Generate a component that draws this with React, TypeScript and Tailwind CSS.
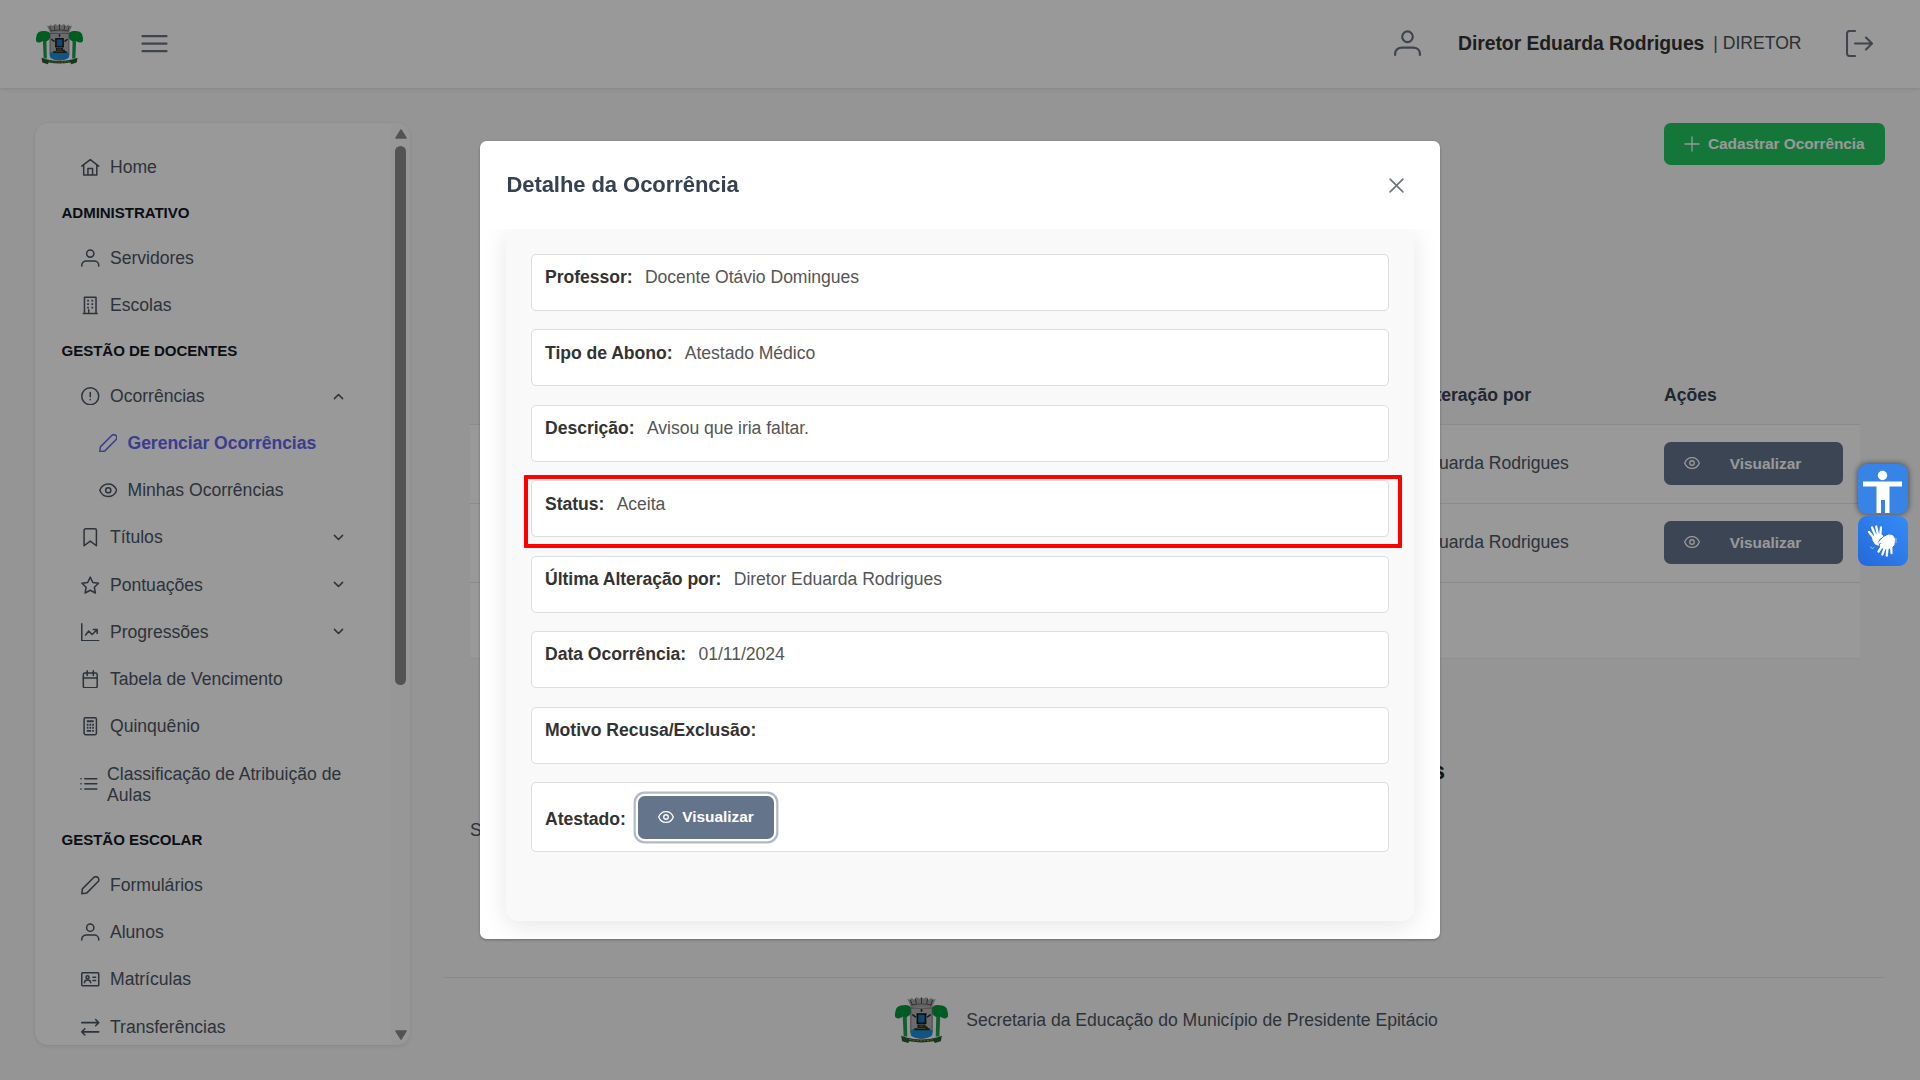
import React from "react";

type IconProps = { className?: string };

const Svg = ({ className = "", children, sw = 1.95 }: { className?: string; children: React.ReactNode; sw?: number }) => (
  <svg viewBox="0 0 24 24" fill="none" stroke="currentColor" strokeWidth={sw} strokeLinecap="round" strokeLinejoin="round" className={`shrink-0 ${className}`}>
    {children}
  </svg>
);

const HomeIcon = (p: IconProps) => (
  <Svg {...p}>
    <path d="M1 10.500 12 2l11 8.500M3.500 9v13h17V9M9 22v-8.500h6V22" />
  </Svg>
);
const UserIcon = (p: IconProps) => (
  <Svg {...p}>
    <circle cx="12" cy="6" r="4.700" />
    <path d="M1 22.200v-1.200c0-3 2.500-5.300 6-5.300h10c3.500 0 6 2.300 6 5.300v1.200" />
  </Svg>
);
const BuildingIcon = (p: IconProps) => (
  <Svg {...p}>
    <path d="M4.500 22.500V1.500h15v21M3 22.800h18M10 22v-4" />
    <path strokeWidth={2.400} strokeLinecap="butt" d="M8 6h2.300M13.500 6h2.300M8 10.500h2.300M13.500 10.500h2.300M8 15h2.300M13.500 15h2.300" />
  </Svg>
);
const AlertIcon = (p: IconProps) => (
  <Svg {...p}>
    <circle cx="12" cy="12" r="11" />
    <path d="M12 7v5.500M12 16.300v.3" strokeWidth={2} />
  </Svg>
);
const PencilIcon = (p: IconProps) => (
  <Svg {...p}>
    <path d="M1 23l.8-6.300L16.500 2a3.800 3.800 0 0 1 5.500 5.500L7.300 22.200z" />
  </Svg>
);
const EyeIcon = (p: IconProps) => (
  <Svg {...p}>
    <path d="M1 12C3 7 7 3.800 12 3.800S21 7 23 12c-2 5-6 8.200-11 8.200S3 17 1 12z" />
    <circle cx="12" cy="12" r="3.400" />
  </Svg>
);
const BookmarkIcon = (p: IconProps) => (
  <Svg {...p}>
    <path d="M4 23V3a2 2 0 0 1 2-2h12a2 2 0 0 1 2 2v20l-8-6z" />
  </Svg>
);
const StarIcon = (p: IconProps) => (
  <Svg {...p}>
    <path d="M12 1.500l3.300 6.900 7.500 1-5.500 5.200 1.400 7.500L12 18.500l-6.700 3.600 1.400-7.500L1.200 9.400l7.500-1z" />
  </Svg>
);
const ChartIcon = (p: IconProps) => (
  <Svg {...p}>
    <path d="M1 1v22h22M6 15.500l4-5 4.500 4.500L21 8.500M16 8.500h5v5" />
  </Svg>
);
const CalendarIcon = (p: IconProps) => (
  <Svg {...p}>
    <rect x="3" y="4" width="18" height="19" rx="2" />
    <path d="M3 10.500h18M8 1v6M16 1v6" />
  </Svg>
);
const CalcIcon = (p: IconProps) => (
  <Svg {...p}>
    <rect x="4" y="1" width="16" height="22" rx="1.800" />
    <path strokeLinecap="butt" strokeWidth={2.500} d="M7.500 5.500h9M7.500 10h2.200M11 10h2.200M14.500 10h2.200M7.500 14h2.200M11 14h2.200M14.500 14h2.200M7.500 18h5.700M14.500 18h2.200" />
  </Svg>
);
const ListIcon = (p: IconProps) => (
  <Svg {...p}>
    <path d="M6.500 5H23M6.500 12H23M6.500 19H23M1.200 5h.3M1.200 12h.3M1.200 19h.3" />
  </Svg>
);
const IdIcon = (p: IconProps) => (
  <Svg {...p}>
    <rect x="1" y="3.500" width="22" height="17" rx="1" />
    <circle cx="8.500" cy="9.300" r="2" />
    <path d="M4.500 16.500c0-2.500 1.500-3.500 4-3.500s4 1 4 3.500M15.500 9.500h3.500M15.500 13.500h3.500" />
  </Svg>
);
const SwapIcon = (p: IconProps) => (
  <Svg {...p}>
    <path d="M1 6h22M19 2l4 4-4 4M23 18H1M5 14l-4 4 4 4" />
  </Svg>
);
const ChevronIcon = ({ up, className = "" }: { up?: boolean; className?: string }) => (
  <svg viewBox="0 0 14 14" fill="none" stroke="currentColor" strokeWidth={1.400} strokeLinecap="round" strokeLinejoin="round" className={`shrink-0 ${className}`}>
    <path d={up ? "M3.200 9l3.800-3.800L10.800 9" : "M3.200 5l3.800 3.800L10.800 5"} />
  </svg>
);

const Crest = ({ className = "" }: IconProps) => (
  <svg viewBox="0 0 52 52" preserveAspectRatio="none" className={`shrink-0 ${className}`}>
    <path d="M12 3l3 1 1-2 3 2 2-3 3 2 2-2 2 2 3-2 2 3 3-2 1 2 3-1-4 10q-10-2-20 0z" fill="#a9a9a9" />
    <path d="M15 4l2 6M20 3l1 6M26 2v7M32 3l-1 6M37 4l-2 6M16 10q10-3 20 0" stroke="#4d4d4d" strokeWidth="1" fill="none" />
    <path d="M7.500 20h4l.5 24H8.500zM44.500 20h-4l-.5 24h3.500z" fill="#19a04a" />
    <path d="M1 14q2-4 7-4 6-1 8 3 1 5-2 8-3 3-6 1-3 3-6 2-3-1-2-5zM51 14q-2-4-7-4-6-1-8 3-1 5 2 8 3 3 6 1 3 3 6 2 3-1 2-5z" fill="#009a3b" />
    <path d="M15.500 13h21v26q0 6-10.500 7-10.500-1-10.500-7z" fill="#b4b4b4" stroke="#666" strokeWidth=".9" />
    <path d="M15.500 37q5-3 10.500-1 5.500-2 10.500 1v5q0 3-10.500 4-10.500-1-10.500-4z" fill="#1b8fda" />
    <rect x="22" y="19.500" width="8" height="10" fill="#1679b8" stroke="#111" strokeWidth="1.600" />
    <path d="M17 20l3.500 3M35 20l-3.500 3M26 14v3" stroke="#222" strokeWidth="1.600" />
    <path d="M22 31h8v2h2v2h2v2H19v-2h3z" fill="#2a2a24" />
    <path d="M24 32.500h4M22 35h8" stroke="#a98a4a" strokeWidth=".8" />
    <path d="M6 43l5 2q15 4 30 0l5-2-1 6-6 2-1-2q-12 2.500-24 0l-1 2-6-2z" fill="#2c5a30" />
    <path d="M14 47q12 3 24 0" stroke="#a59a3c" strokeWidth="1" strokeDasharray="2 1.500" fill="none" />
  </svg>
);

type Row = { kind: "title" | "item" | "sub" | "wrap"; label: string; icon?: React.FC<IconProps>; chevron?: "up" | "down"; active?: boolean };

const menu: Row[] = [
  { kind: "item", label: "Home", icon: HomeIcon },
  { kind: "title", label: "Administrativo" },
  { kind: "item", label: "Servidores", icon: UserIcon },
  { kind: "item", label: "Escolas", icon: BuildingIcon },
  { kind: "title", label: "Gestão de Docentes" },
  { kind: "item", label: "Ocorrências", icon: AlertIcon, chevron: "up" },
  { kind: "sub", label: "Gerenciar Ocorrências", icon: PencilIcon, active: true },
  { kind: "sub", label: "Minhas Ocorrências", icon: EyeIcon },
  { kind: "item", label: "Títulos", icon: BookmarkIcon, chevron: "down" },
  { kind: "item", label: "Pontuações", icon: StarIcon, chevron: "down" },
  { kind: "item", label: "Progressões", icon: ChartIcon, chevron: "down" },
  { kind: "item", label: "Tabela de Vencimento", icon: CalendarIcon },
  { kind: "item", label: "Quinquênio", icon: CalcIcon },
  { kind: "wrap", label: "Classificação de Atribuição de Aulas", icon: ListIcon },
  { kind: "title", label: "Gestão Escolar" },
  { kind: "item", label: "Formulários", icon: PencilIcon },
  { kind: "item", label: "Alunos", icon: UserIcon },
  { kind: "item", label: "Matrículas", icon: IdIcon },
  { kind: "item", label: "Transferências", icon: SwapIcon },
];

const MenuRow = ({ row }: { row: Row }) => {
  if (row.kind === "title")
    return <div className="flex h-[43.4px] items-center pt-[1.500px] pl-[26.500px] text-[15.08px] tracking-[-0.06px] font-bold uppercase text-[#111827]">{row.label}</div>;
  const Icon = row.icon!;
  if (row.kind === "wrap")
    return (
      <div className="flex h-[68.400px] items-center pl-[45px]">
        <Icon className="size-[17.600px]" />
        <span className="mt-[1px] ml-[9.500px] w-[250px] leading-[21px]">{row.label}</span>
      </div>
    );
  return (
    <div className={`flex h-[47.200px] items-center ${row.kind === "sub" ? "pl-[63.500px]" : "pl-[46px]"} ${row.active ? "font-bold tracking-[-0.05px] text-[#6366f1]" : ""}`}>
      <Icon className="size-[18.500px]" />
      <span className="ml-[10.500px]">{row.label}</span>
      {row.chevron && <ChevronIcon up={row.chevron === "up"} className="ml-auto mr-[45px] size-[15px]" />}
    </div>
  );
};

const Sidebar = () => (
  <aside className="flex h-[922px] w-[375px] overflow-hidden rounded-[13px] bg-white shadow-[0_3px_5px_rgba(0,0,0,0.02),0_0_2px_rgba(0,0,0,0.05),0_1px_4px_rgba(0,0,0,0.08)]">
    <nav className="w-[356px] pt-[21.100px]">
      {menu.map((row) => (
        <MenuRow key={row.label} row={row} />
      ))}
    </nav>
    <div className="flex w-[19px] flex-col items-center bg-[#fcfcfc] pt-[6px] pb-[5px] text-[#8b8b8b]">
      <svg viewBox="0 0 12 10" className="h-[10px] w-[12px]" fill="currentColor" stroke="currentColor" strokeWidth="1.500" strokeLinejoin="round"><path d="M6 1l5 8H1z" /></svg>
      <div className="mt-[7px] mr-[1px] h-[539px] w-[11px] rounded-full bg-[#8b8b8b]" />
      <svg viewBox="0 0 12 10" className="mt-auto h-[10px] w-[12px]" fill="currentColor" stroke="currentColor" strokeWidth="1.500" strokeLinejoin="round"><path d="M6 9l5-8H1z" /></svg>
    </div>
  </aside>
);

const Topbar = () => (
  <header className="relative flex h-[88px] items-center bg-white pl-[36px] pr-[47.500px] shadow-[0_3px_5px_rgba(0,0,0,0.02),0_0_2px_rgba(0,0,0,0.05),0_1px_4px_rgba(0,0,0,0.08)]">
    <Crest className="h-[42px] w-[47px]" />
    <svg viewBox="0 0 26 18" className="ml-[58px] h-[18px] w-[27px] text-[#6b7280]" stroke="currentColor" strokeWidth="2.200" strokeLinecap="round">
      <path d="M1 1.200h24M1 8.700h24M1 16.200h24" />
    </svg>
    <UserIcon className="mb-[1px] ml-auto size-[27px] text-[#6b7280]" />
    <span className="ml-[37px] text-[19.360px] tracking-[-0.04px] font-bold text-[#333]">Diretor Eduarda Rodrigues</span>
    <span className="mb-[2px] ml-[9px] text-[17.600px] text-[#495057]">| DIRETOR</span>
    <svg viewBox="0 0 27 27" className="mb-[1px] ml-[44px] size-[27px] text-[#6b7280]" fill="none" stroke="currentColor" strokeWidth="2.100" strokeLinecap="round" strokeLinejoin="round">
      <path d="M9 1H3.500A2.500 2.500 0 0 0 1 3.500v20A2.500 2.500 0 0 0 3.500 26H9M9 13.500h17M20 7.500l6 6-6 6" />
    </svg>
  </header>
);

const TableRow = () => (
  <div className="flex h-[79px] items-center border-b border-[#e5e7eb] bg-white pb-[2px]">
    <span className="ml-[890px] w-[304px]">Diretor Eduarda Rodrigues</span>
    <button className="flex h-[43px] w-[179px] items-center rounded-[6.600px] bg-[#64748b] pl-[20px] text-[15.400px] font-bold text-white">
      <EyeIcon className="size-[16px]" />
      <span className="mt-[1px] flex-1 pr-[12px] text-center">Visualizar</span>
    </button>
  </div>
);

const Main = () => (
  <main className="ml-[33px] flex flex-1 flex-col">
    <div className="flex justify-end">
      <button className="flex h-[42px] w-[221px] items-center rounded-[6.600px] bg-[#22c55e] pl-[20px] text-[15.400px] tracking-[-0.04px] font-bold text-white">
        <svg viewBox="0 0 16 16" className="size-[16px]" stroke="currentColor" strokeWidth="1.300" strokeLinecap="round"><path d="M8 1v14M1 8h14" /></svg>
        <span className="ml-[8px]">Cadastrar Ocorrência</span>
      </button>
    </div>
    <section className="mt-[200px] ml-[27px] w-[1390px]">
      <div className="flex h-[60px] items-center border-b border-[#e5e7eb] pt-[2px] font-bold text-[#374151]">
        <span className="ml-[890px] w-[304px]">Última Alteração por</span>
        <span>Ações</span>
      </div>
      <TableRow />
      <TableRow />
      <div className="h-[76px] border-b border-[#eff1f4] bg-white" />
    </section>
    <h2 className="mt-[96px] mr-[440px] text-right text-[24px] leading-[32px] font-bold text-[#212529]">Ocorrências</h2>
    <p className="mt-[32px] ml-[27px] leading-[22px]">Status</p>
    <footer className="mt-[136px] flex h-[84px] items-center justify-center border-t border-[#e5e7eb] pl-[5px]">
      <Crest className="h-[48px] w-[53px]" />
      <span className="mt-[2px] ml-[18px] tracking-[-0.03px]">Secretaria da Educação do Município de Presidente Epitácio</span>
    </footer>
  </main>
);

const fields = [
  ["Professor:", "Docente Otávio Domingues"],
  ["Tipo de Abono:", "Atestado Médico"],
  ["Descrição:", "Avisou que iria faltar."],
  ["Status:", "Aceita"],
  ["Última Alteração por:", "Diretor Eduarda Rodrigues"],
  ["Data Ocorrência:", "01/11/2024"],
  ["Motivo Recusa/Exclusão:", ""],
];

const Modal = () => (
  <div className="flex h-[798px] w-[960px] flex-col overflow-hidden rounded-[6.600px] bg-white shadow-[0_1px_3px_rgba(0,0,0,0.3)]">
    <div className="flex h-[88px] items-center justify-between pl-[26.400px] pr-[36px]">
      <h1 className="mb-[2px] text-[22px] tracking-[-0.06px] font-bold text-[#374151]">Detalhe da Ocorrência</h1>
      <svg viewBox="0 0 16 16" className="size-[15px] text-[#6b7280]" stroke="currentColor" strokeWidth="1.700" strokeLinecap="round"><path d="M1.200 1.200l13.600 13.600M14.800 1.200L1.200 14.800" /></svg>
    </div>
    <div className="flex-1 overflow-hidden px-[26px]">
      <div className="h-[692px] rounded-b-[13px] bg-[#f9f9f9] px-[25px] pt-[25px] shadow-[0_5px_24px_rgba(0,0,0,0.1)]">
        <div className="flex flex-col gap-[18.430px]">
          {fields.map(([label, value]) => (
            <div key={label} className="relative flex h-[57px] shrink-0 gap-[12.300px] rounded-[5px] border border-[#ddd] bg-white pt-[12.300px] pl-[13px] leading-[21px]">
              <strong className="tracking-[-0.04px] text-[#333]">{label}</strong>
              <span className="tracking-[-0.04px] text-[#555]">{value}</span>
              {label === "Status:" && <div className="absolute -top-[6.300px] -left-[8.500px] h-[73px] w-[878px] rounded-[1px] border-4 border-[#ff0000]" />}
            </div>
          ))}
          <div className="flex h-[70px] items-center gap-[12.500px] rounded-[5px] border border-[#ddd] bg-white pl-[13px]">
            <strong className="mt-[4px] tracking-[-0.04px] text-[#333]">Atestado:</strong>
            <button className="mt-[1px] flex h-[43px] w-[136px] items-center rounded-[6.600px] bg-[#64748b] pl-[20px] text-[15.400px] font-bold text-white shadow-[0_0_0_2.200px_#ffffff,0_0_0_4.400px_#b0b9c6]">
              <EyeIcon className="size-[16px]" />
              <span className="mb-[1px] ml-[8px]">Visualizar</span>
            </button>
          </div>
        </div>
      </div>
    </div>
  </div>
);

const Floating = () => (
  <div className="fixed top-[464px] right-[12px] flex flex-col gap-[1.500px]">
    <div className="size-[50px] rounded-[9px] bg-[#3783e6] shadow-[0_0_6px_rgba(0,0,0,0.6)]">
      <svg viewBox="0 0 50 50" fill="#fff"><circle cx="24.500" cy="11.500" r="4.700" /><path d="M5 17.500h39v5H31.500V49H27V36h-4v13h-4.500V22.500H5z" /></svg>
    </div>
    <div className="size-[50px] rounded-[9px] bg-linear-to-tr from-[#2468d8] to-[#358cf8]">
      <svg viewBox="0 0 50 50" fill="none" stroke="#fff" strokeLinecap="round" strokeLinejoin="round">
        <path strokeWidth="2.300" d="M11 16l5 6M14 11.500l4 9M18.200 10.500l2 9M23 11.500l-.8 8M20.500 35.500l4-6M24.300 38.500l3-8M28.700 39.500l1-9M33.500 37l-.5-9" />
        <path fill="#fff" strokeWidth="1" d="M14.500 21.500l3-3 6 .2 1.500 1.500-4 3-1.500 3 1 3-3-1q-3-3-3-6.700z" />
        <path fill="#fff" strokeWidth="1" d="M21.500 25.500l4-4 5-2.500 4 .5 2 3-.5 6.500-3 3-5 .5-5-1-1-2.500 3.500-3-4.500 1.200z" />
        <path strokeWidth=".8" d="M12.500 31l2 1.500 1.500-1M38 22.500v4" opacity=".7" />
      </svg>
    </div>
  </div>
);

export default function App() {
  return (
    <div className="h-[1080px] w-[1920px] overflow-hidden bg-[#f8f9fb] font-['Liberation_Sans',Arial,sans-serif] text-[17.600px] tracking-[-0.02px] text-[#4b5563]">
      <Topbar />
      <div className="flex px-[35px] pt-[35px]">
        <Sidebar />
        <Main />
      </div>
      <div className="fixed inset-0 flex items-center justify-center bg-black/40">
        <Modal />
      </div>
      <Floating />
    </div>
  );
}
